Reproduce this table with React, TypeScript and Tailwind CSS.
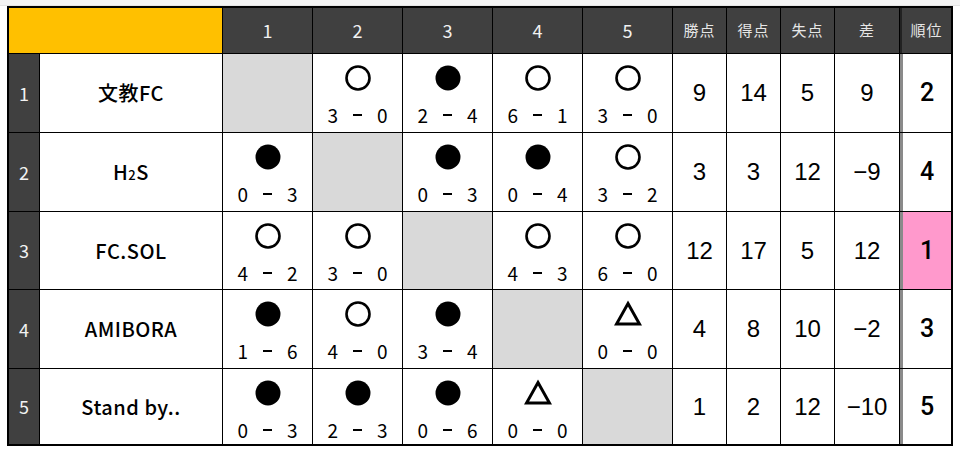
import React from 'react';

type Res = 'W' | 'L' | 'D' | null;

const teams = [
  { name: '文教FC', results: [null, ['W', '3', '0'], ['L', '2', '4'], ['W', '6', '1'], ['W', '3', '0']], stats: ['9', '14', '5', '9'], rank: '2' },
  { name: 'H2S', results: [['L', '0', '3'], null, ['L', '0', '3'], ['L', '0', '4'], ['W', '3', '2']], stats: ['3', '3', '12', '−9'], rank: '4' },
  { name: 'FC.SOL', results: [['W', '4', '2'], ['W', '3', '0'], null, ['W', '4', '3'], ['W', '6', '0']], stats: ['12', '17', '5', '12'], rank: '1' },
  { name: 'AMIBORA', results: [['L', '1', '6'], ['W', '4', '0'], ['L', '3', '4'], null, ['D', '0', '0']], stats: ['4', '8', '10', '−2'], rank: '3' },
  { name: 'Stand by..', results: [['L', '0', '3'], ['L', '2', '3'], ['L', '0', '6'], ['D', '0', '0'], null], stats: ['1', '2', '12', '−10'], rank: '5' },
] as { name: string; results: ([Res, string, string] | null)[]; stats: string[]; rank: string }[];

const jp = { fontFamily: '"Noto Sans CJK JP", "Noto Sans", sans-serif' };
const ar = { fontFamily: '"Liberation Sans", Arial, sans-serif' };
const rb = { fontFamily: 'Roboto, "Liberation Sans", sans-serif' };

function Mark({ r }: { r: Res }) {
  if (r === 'W')
    return (
      <svg width="28" height="28" viewBox="0 0 28 28">
        <circle cx="14" cy="14" r="11.5" fill="none" stroke="#000" strokeWidth="2.6" />
      </svg>
    );
  if (r === 'L')
    return (
      <svg width="28" height="28" viewBox="0 0 28 28">
        <circle cx="14" cy="14" r="12.5" fill="#000" />
      </svg>
    );
  return (
    <svg width="28" height="28" viewBox="0 0 28 28">
      <path d="M14 3.5 L25.5 24 L2.5 24 Z" fill="none" stroke="#000" strokeWidth="3" strokeLinejoin="miter" />
    </svg>
  );
}

function TeamName({ name }: { name: string }) {
  if (name === 'H2S')
    return (
      <span>
        H<span className="text-[13px]">2</span>S
      </span>
    );
  return <span>{name}</span>;
}

export default function App() {
  const head = ['勝点', '得点', '失点', '差'];
  return (
    <div className="w-[960px] h-[453px] bg-white relative overflow-hidden">
      <div className="h-[6px] bg-[#f3f3f3] border-b border-[#e4e4e4]" />
      <div
        className="ml-[7px] w-[946px] grid grid-cols-[30px_182px_89px_89px_89px_89px_89px_53px_53px_53px_64px_51px] grid-rows-[45px_78px_78px_77px_78px_75px] gap-px bg-black border-2 border-black"
        style={jp}
      >
        <div className="col-span-2 bg-[#ffc000]" />
        {['1', '2', '3', '4', '5'].map((n) => (
          <div key={n} className="bg-[#404040] text-[#f2f2f2] text-[18px] flex items-center justify-center">
            {n}
          </div>
        ))}
        {head.map((h) => (
          <div key={h} className="bg-[#404040] text-[#e6e6e6] text-[15px] flex items-center justify-center tracking-[1px]">
            {h}
          </div>
        ))}
        <div className="bg-[#404040] text-[#e6e6e6] text-[15px] flex items-center justify-center tracking-[1px] border-l-2 border-[#222]">
          順位
        </div>

        {teams.map((t, i) => (
          <React.Fragment key={t.name}>
            <div className="bg-[#404040] text-[#f2f2f2] text-[18px] flex items-center justify-center">{i + 1}</div>
            <div className="bg-white text-black text-[20px] font-medium flex items-center justify-center tracking-[0.5px]">
              <TeamName name={t.name} />
            </div>
            {t.results.map((r, j) =>
              r === null ? (
                <div key={j} className="bg-[#d9d9d9]" />
              ) : (
                <div key={j} className="bg-white flex flex-col items-center">
                  <div className="mt-[10px] h-[28px]">
                    <Mark r={r[0]} />
                  </div>
                  <div className="mt-[11px] leading-[24px] text-[19px] text-black flex items-center gap-[15px]">
                    <span>{r[1]}</span>
                    <span className="w-[9px] h-[2px] bg-black" />
                    <span>{r[2]}</span>
                  </div>
                </div>
              )
            )}
            {t.stats.map((s, k) => (
              <div key={k} className="bg-white text-black text-[24px] flex items-center justify-center" style={ar}>
                {s}
              </div>
            ))}
            <div
              className={`${t.rank === '1' ? 'bg-[#ff99cc]' : 'bg-white'} text-black text-[25px] font-medium flex items-center justify-center border-l-[3px] border-[#8a8a8a]`}
              style={rb}
            >
              {t.rank}
            </div>
          </React.Fragment>
        ))}
      </div>
    </div>
  );
}
